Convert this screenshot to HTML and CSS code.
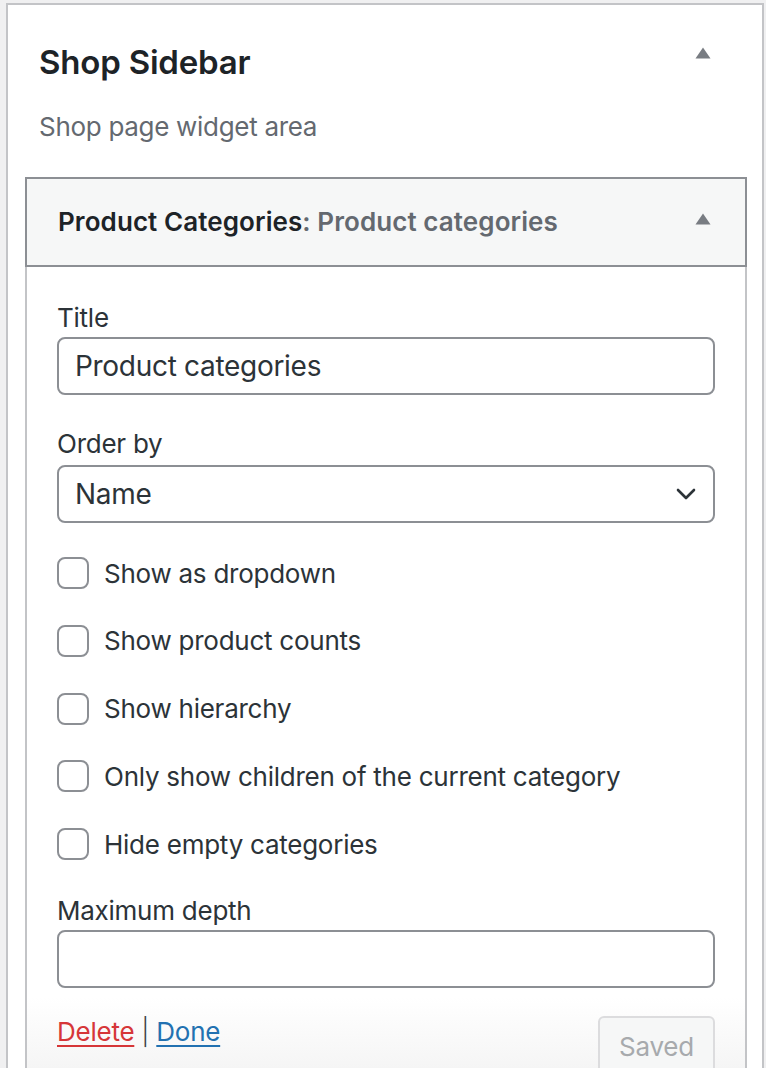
FILE: index.html
```html
<!DOCTYPE html>
<html lang="en">
<head>
<meta charset="utf-8">
<title>Shop Sidebar</title>
<link rel="stylesheet" href="styles.css">
</head>
<body>
<div class="sidebar">
  <div class="sidebar-head">
    <div class="sidebar-name">
      <h2>Shop Sidebar</h2>
      <svg class="arrow" width="16" height="12" viewBox="0 0 16 12"><path d="M8 0.5 L15.5 11.5 L0.5 11.5 Z" fill="#787c82"/></svg>
    </div>
    <p class="sidebar-desc">Shop page widget area</p>
  </div>

  <div class="widget">
    <div class="widget-top">
      <h3 class="widget-title">Product Categories<span class="in-title">: Product categories</span></h3>
      <svg class="arrow" width="16" height="12" viewBox="0 0 16 12"><path d="M8 0.5 L15.5 11.5 L0.5 11.5 Z" fill="#787c82"/></svg>
    </div>
    <div class="widget-inside">
      <label class="field-label first">Title</label>
      <div class="text-input">Product categories</div>

      <label class="field-label gap">Order by</label>
      <div class="select">
        <span>Name</span>
        <svg width="20" height="12" viewBox="0 0 20 12"><path d="M2 2 L10 10 L18 2" fill="none" stroke="#2c3338" stroke-width="2.6" stroke-linecap="round" stroke-linejoin="round"/></svg>
      </div>

      <div class="checks">
        <div class="check"><span class="box"></span><span>Show as dropdown</span></div>
        <div class="check"><span class="box"></span><span>Show product counts</span></div>
        <div class="check"><span class="box"></span><span>Show hierarchy</span></div>
        <div class="check"><span class="box"></span><span>Only show children of the current category</span></div>
        <div class="check"><span class="box"></span><span>Hide empty categories</span></div>
      </div>

      <label class="field-label depth">Maximum depth</label>
      <div class="text-input"></div>

      <div class="actions">
        <div class="links"><a class="delete" href="#">Delete</a> <span class="sep">|</span> <a class="done" href="#">Done</a></div>
        <div class="saved">Saved</div>
      </div>
    </div>
  </div>
</div>
</body>
</html>
```

FILE: styles.css
```css
html, body {
  margin: 0;
  padding: 0;
  background: #f0f0f1;
  overflow: hidden;
  height: 1068px;
}

body {
  font-family: "Inter", "Liberation Sans", sans-serif;
  color: #2c3338;
  letter-spacing: -0.25px;
}

.sidebar {
  margin: 3px 2px 0 6px;
  border: 2px solid #c3c4c7;
  border-bottom: 0;
  background: #fff;
  min-height: 1200px;
}

.sidebar-head {
  padding: 37px 51px 0 31px;
}

.sidebar-name {
  display: flex;
  justify-content: space-between;
  align-items: flex-start;
}

.sidebar-name h2 {
  margin: 0;
  font-size: 33px;
  line-height: 40px;
  font-weight: 600;
  color: #1d2327;
  letter-spacing: -0.2px;
}

.sidebar-name .arrow {
  margin-top: 5px;
}

.sidebar-desc {
  margin: 27px 0 0;
  font-size: 26px;
  line-height: 36px;
  color: #646970;
  letter-spacing: -0.3px;
}

.widget {
  margin: 32px 15px 0 17px;
}

.widget-top {
  display: flex;
  justify-content: space-between;
  align-items: center;
  height: 86px;
  padding: 0 34px 0 31px;
  background: #f6f7f7;
  border: 2px solid #8c8f94;
}

.widget-top .arrow {
  margin-top: -6px;
}

.widget-title {
  margin: 0;
  font-size: 26px;
  line-height: 36px;
  font-weight: 600;
  color: #1d2327;
  letter-spacing: 0.08px;
}

.in-title {
  color: #646970;
}

.widget-inside {
  border: 2px solid #c3c4c7;
  border-top: 0;
  border-bottom: 0;
  padding: 33px 30px 0;
  min-height: 900px;
  background: linear-gradient(to bottom, #fff 0, #fff 730px, #f4f4f4 810px, #f4f4f4 100%);
}

.field-label {
  display: block;
  font-size: 26px;
  line-height: 36px;
  color: #2c3338;
}

.field-label.gap {
  margin-top: 31px;
}

.field-label.depth {
  margin-top: 33px;
}

.text-input {
  box-sizing: border-box;
  height: 58px;
  margin-top: 1px;
  padding: 0 16px;
  border: 2px solid #8c8f94;
  border-radius: 8px;
  background: #fff;
  font-size: 28px;
  line-height: 54px;
  color: #2c3338;
  letter-spacing: -0.3px;
}

.select {
  box-sizing: border-box;
  height: 58px;
  margin-top: 3px;
  padding: 0 17px 0 16px;
  border: 2px solid #8c8f94;
  border-radius: 8px;
  background: #fff;
  font-size: 28px;
  display: flex;
  justify-content: space-between;
  align-items: center;
  color: #2c3338;
  letter-spacing: -0.3px;
}

.checks {
  margin-top: 34px;
  display: flex;
  flex-direction: column;
  gap: 35.75px;
}

.check {
  display: flex;
  align-items: center;
  gap: 15px;
  height: 32px;
  font-size: 26px;
  color: #2c3338;
}

.box {
  box-sizing: border-box;
  width: 32px;
  height: 32px;
  border: 2px solid #8c8f94;
  border-radius: 8px;
  background: #fff;
  flex: none;
}

.actions {
  display: flex;
  justify-content: space-between;
  align-items: flex-start;
  margin-top: 26px;
}

.links {
  font-size: 26px;
  line-height: 36px;
  color: #3c434a;
}

.sep {
  font-weight: 300;
}

.links a {
  text-decoration: underline;
  text-underline-offset: 4px;
  text-decoration-thickness: 2px;
}

.delete {
  color: #d63638;
}

.done {
  color: #2271b1;
}

.saved {
  box-sizing: border-box;
  margin-top: 2px;
  width: 117px;
  height: 62px;
  border: 2px solid #dcdcde;
  border-radius: 6px;
  background: #f6f7f7;
  color: #a7aaad;
  font-size: 26px;
  line-height: 58px;
  text-align: center;
}
```
